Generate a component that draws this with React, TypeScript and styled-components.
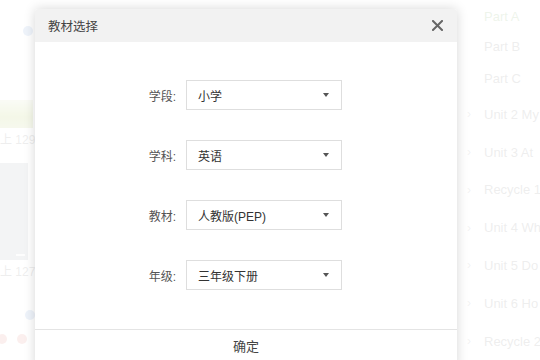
import React from 'react';
import styled, { createGlobalStyle } from 'styled-components';

const GlobalStyle = createGlobalStyle`
  html, body { margin: 0; padding: 0; background: #fff; }
  body {
    width: 540px;
    height: 360px;
    overflow: hidden;
    font-family: "Liberation Sans", "Noto Sans CJK SC", sans-serif;
  }
`;

const Page = styled.div`
  position: relative;
  width: 540px;
  height: 360px;
  display: flex;
  justify-content: space-between;
  overflow: hidden;
`;

const LeftCol = styled.div`
  width: 60px;
  flex-shrink: 0;
  display: flex;
  flex-direction: column;
`;

const Spacer = styled.div<{ h: number }>`
  height: ${(p) => p.h}px;
  flex-shrink: 0;
`;

const Dot = styled.div<{ c: string; size: number; ml: number }>`
  width: ${(p) => p.size}px;
  height: ${(p) => p.size}px;
  margin-left: ${(p) => p.ml}px;
  border-radius: 50%;
  background: ${(p) => p.c};
  flex-shrink: 0;
`;

const Cover = styled.div`
  width: 33px;
  height: 28px;
  background: linear-gradient(180deg, #e6ecd0 0%, #c6d78a 60%, #d2dca8 100%);
`;

const Stat = styled.div`
  height: 24px;
  line-height: 24px;
  font-size: 12px;
  color: #a8a8a8;
  white-space: nowrap;
`;

const Thumb = styled.div`
  width: 28px;
  height: 97px;
  background: #c4c6cc;
  display: flex;
  align-items: flex-end;
  justify-content: flex-end;
  padding: 0 3px 4px 0;
  box-sizing: border-box;
`;

const ThumbBar = styled.div`
  width: 9px;
  height: 2px;
  background: #f4f4f4;
`;

const DotRow = styled.div`
  display: flex;
  align-items: center;
`;

const Tree = styled.div`
  width: 85px;
  box-sizing: border-box;
  flex-shrink: 0;
  overflow: hidden;
  padding: 2px 0 0 12px;
  display: flex;
  flex-direction: column;
`;

const TreeItem = styled.div<{ h: number; active?: boolean }>`
  height: ${(p) => p.h}px;
  display: flex;
  align-items: center;
  gap: 8px;
  font-size: 13px;
  white-space: nowrap;
  color: ${(p) => (p.active ? '#a9c79a' : '#a8a8a8')};
`;

const Chevron = styled.span`
  width: 9px;
  flex-shrink: 0;
  font-size: 12px;
  color: #c0c0c0;
`;

const Overlay = styled.div`
  position: absolute;
  inset: 0;
  background: rgba(255, 255, 255, 0.8);
`;

const Modal = styled.div`
  position: absolute;
  left: 35px;
  top: 9px;
  width: 422px;
  background: #fff;
  border-radius: 3px 3px 0 0;
  box-shadow: 0 0 12px rgba(0, 0, 0, 0.16);
  display: flex;
  flex-direction: column;
`;

const Header = styled.div`
  height: 33px;
  background: #f2f2f2;
  border-radius: 3px 3px 0 0;
  display: flex;
  align-items: center;
  justify-content: space-between;
  padding: 0 13px;
`;

const Title = styled.div`
  font-size: 12.5px;
  color: #444;
`;

const Close = styled.button`
  border: 0;
  background: none;
  padding: 0;
  width: 14px;
  height: 14px;
  display: flex;
  align-items: center;
  justify-content: center;
  cursor: pointer;
`;

const Body = styled.div`
  padding: 38px 0 39px;
  display: flex;
  flex-direction: column;
  gap: 30px;
`;

const Row = styled.div`
  display: flex;
  align-items: center;
  height: 30px;
`;

const Label = styled.div`
  width: 151px;
  text-align: right;
  font-size: 12px;
  color: #555;
  padding-right: 10px;
  box-sizing: border-box;
`;

const Select = styled.div`
  width: 156px;
  height: 30px;
  box-sizing: border-box;
  border: 1px solid #dedede;
  display: flex;
  align-items: center;
  justify-content: space-between;
  padding: 0 12px 0 11px;
  font-size: 12px;
  color: #333;
`;

const Caret = styled.span`
  width: 0;
  height: 0;
  border-left: 3px solid transparent;
  border-right: 3px solid transparent;
  border-top: 4px solid #555;
`;

const Footer = styled.div`
  border-top: 1px solid #e4e4e4;
  height: 40px;
  display: flex;
  justify-content: center;
  padding-top: 6px;
  box-sizing: border-box;
  font-size: 13px;
  color: #444;
`;

const rows = [
  { label: '学段', value: '小学' },
  { label: '学科', value: '英语' },
  { label: '教材', value: '人教版(PEP)' },
  { label: '年级', value: '三年级下册' },
];

const tree = [
  { t: 'Part A', h: 30, active: true },
  { t: 'Part B', h: 30 },
  { t: 'Part C', h: 34 },
  { t: 'Unit 2 My', h: 38, sub: true },
  { t: 'Unit 3 At', h: 38, sub: true },
  { t: 'Recycle 1', h: 38, sub: true },
  { t: 'Unit 4 Wh', h: 38, sub: true },
  { t: 'Unit 5 Do', h: 38, sub: true },
  { t: 'Unit 6 Ho', h: 38, sub: true },
  { t: 'Recycle 2', h: 38, sub: true },
];

export default function App() {
  return (
    <>
      <GlobalStyle />
      <Page>
        <LeftCol>
          <Spacer h={26} />
          <Dot c="#a9c2e6" size={10} ml={23} />
          <Spacer h={64} />
          <Cover />
          <Stat>上 129</Stat>
          <Spacer h={11} />
          <Thumb><ThumbBar /></Thumb>
          <Stat>上 127</Stat>
          <Spacer h={26} />
          <Dot c="#a9c2e6" size={10} ml={25} />
          <Spacer h={14} />
          <DotRow>
            <Dot c="#eab0a8" size={10} ml={-3} />
            <Dot c="#eab0a8" size={10} ml={10} />
          </DotRow>
        </LeftCol>
        <Tree>
          {tree.map((it) => (
            <TreeItem key={it.t} h={it.h} active={it.active}>
              <Chevron>{it.sub ? '›' : ''}</Chevron>
              <span>{it.t}</span>
            </TreeItem>
          ))}
        </Tree>
        <Overlay />
        <Modal>
          <Header>
            <Title>教材选择</Title>
            <Close aria-label="关闭">
              <svg width="11" height="11" viewBox="0 0 11 11">
                <path d="M1 1L10 10M10 1L1 10" stroke="#666" strokeWidth="2" strokeLinecap="square" />
              </svg>
            </Close>
          </Header>
          <Body>
            {rows.map((r) => (
              <Row key={r.label}>
                <Label>{r.label}:</Label>
                <Select>
                  <span>{r.value}</span>
                  <Caret />
                </Select>
              </Row>
            ))}
          </Body>
          <Footer>确定</Footer>
        </Modal>
      </Page>
    </>
  );
}
